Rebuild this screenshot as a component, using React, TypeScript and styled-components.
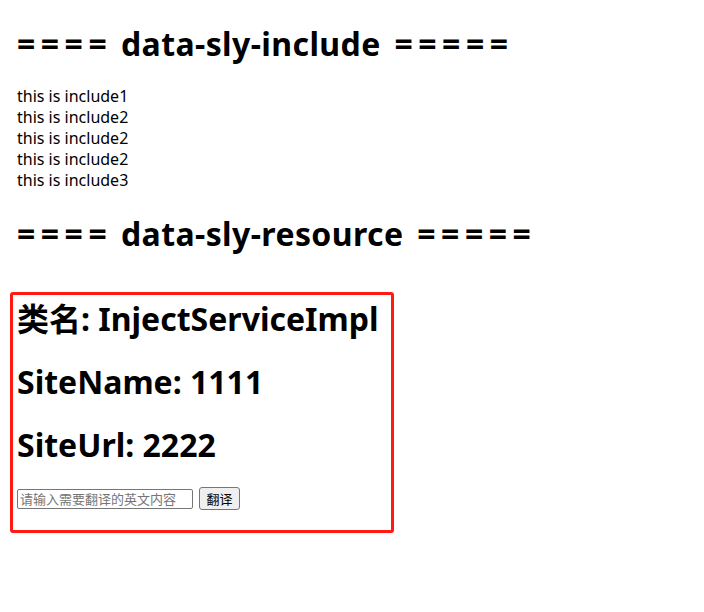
import styled, { createGlobalStyle } from 'styled-components';

const GlobalStyle = createGlobalStyle`
  html, body {
    margin: 0;
    padding: 0;
    background: #ffffff;
  }
  body {
    font-family: "Noto Sans", "Noto Sans CJK SC", sans-serif;
    font-size: 16px;
    color: #000000;
  }
`;

const Page = styled.div`
  padding: 2px 17px 0;
  width: 704px;
  box-sizing: border-box;
`;

const Title = styled.h1`
  font-size: 32px;
  font-weight: 700;
  line-height: 42px;
  letter-spacing: 0.4px;
  margin: 21px 0;
`;

// the "=" runs in the titles are set wider, as in the original font
const Rule = styled.span`
  letter-spacing: 5.5px;
`;

const Lines = styled.div`
  line-height: 21px;
  padding-bottom: 1px;
`;

const Line = styled.div``;

const ResourceBox = styled.div`
  width: 384px;
  box-sizing: border-box;
  margin: 37px 0 0 -7px;
  padding: 3px 4px 20px;
  border: 3px solid #ff1a12;
  border-radius: 3px;
`;

const Field = styled.h1`
  font-size: 32px;
  font-weight: 700;
  line-height: 42px;
  margin: 0 0 21px;
`;

const Form = styled.div`
  display: flex;
  align-items: center;
  gap: 6px;
`;

const Input = styled.input`
  width: 176px;
  height: 20px;
  box-sizing: border-box;
  padding: 1px 2px;
  border: 1px solid #767676;
  border-radius: 2px;
  font-family: "Noto Sans CJK SC", sans-serif;
  font-size: 13px;

  &::placeholder {
    color: #757575;
  }
`;

const Button = styled.button`
  width: 41px;
  height: 23px;
  box-sizing: border-box;
  padding: 0;
  background: #efefef;
  border: 1px solid #767676;
  border-radius: 3px;
  font-family: "Noto Sans CJK SC", sans-serif;
  font-size: 13px;
  color: #000000;
`;

const includes = [
  'this is include1',
  'this is include2',
  'this is include2',
  'this is include2',
  'this is include3',
];

export default function App() {
  return (
    <>
      <GlobalStyle />
      <Page>
        <Title>
          <Rule>====</Rule> data-sly-include<Rule> =====</Rule>
        </Title>
        <Lines>
          {includes.map((text, i) => (
            <Line key={i}>{text}</Line>
          ))}
        </Lines>
        <Title>
          <Rule>====</Rule> data-sly-resource<Rule> =====</Rule>
        </Title>
        <ResourceBox>
          <Field>类名: InjectServiceImpl</Field>
          <Field>SiteName: 1111</Field>
          <Field>SiteUrl: 2222</Field>
          <Form>
            <Input type="text" placeholder="请输入需要翻译的英文内容" />
            <Button>翻译</Button>
          </Form>
        </ResourceBox>
      </Page>
    </>
  );
}
